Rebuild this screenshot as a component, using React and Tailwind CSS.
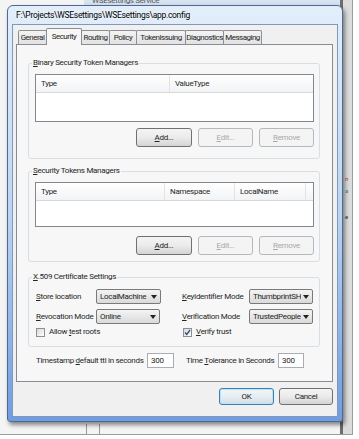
import React from 'react';

const tabs = [
  { label: 'General', w: 'w-[29px]' },
  { label: 'Security', w: 'w-[36px]', active: true },
  { label: 'Routing', w: 'w-[29px]' },
  { label: 'Policy', w: 'w-[28px]' },
  { label: 'TokenIssuing', w: 'w-[50px]' },
  { label: 'Diagnostics', w: 'w-[39px]' },
  { label: 'Messaging', w: 'w-[39px]' },
];

function U({ children }) {
  return <span className="underline underline-offset-1">{children}</span>;
}

function Btn({ children, disabled, primary, className = 'w-[56px] h-[19px]' }) {
  let look =
    'border-[#707070] bg-gradient-to-b from-[#f4f4f4] via-[#ebebeb] to-[#d4d4d4] text-[#222]';
  if (disabled) look = 'border-[#b5b9bc] bg-[#f4f4f4] text-[#a8a8a8]';
  if (primary)
    look =
      'border-[#3c7fb1] bg-gradient-to-b from-[#f2f6f8] via-[#e6eef2] to-[#d3dde2] text-[#222] shadow-[inset_0_0_0_1px_#b8e3f8]';
  return (
    <div className={`${className} ${look} rounded-[3px] border flex items-center justify-center`}>
      {children}
    </div>
  );
}

function Combo({ value, w = 'w-[65px]' }) {
  return (
    <div
      className={`${w} h-[15px] rounded-[2px] border border-[#7a7a7a] bg-gradient-to-b from-[#f4f4f4] to-[#dadada] flex items-center pl-[3px] pr-[3px] gap-[2px]`}
    >
      <span className="flex-1 overflow-hidden whitespace-nowrap">{value}</span>
      <svg width="6" height="4" viewBox="0 0 6 4">
        <path d="M0 0h6L3 4z" fill="#222" />
      </svg>
    </div>
  );
}

function Check({ checked }) {
  return (
    <div className="w-[9px] h-[9px] border border-[#8e8f8f] bg-gradient-to-br from-[#d8d8d8] to-white flex items-center justify-center">
      {checked && (
        <svg width="7" height="7" viewBox="0 0 7 7">
          <path d="M1 3.5l1.8 2L6 1" stroke="#2a4f8a" strokeWidth="1.3" fill="none" />
        </svg>
      )}
    </div>
  );
}

function ListView({ cols, h }) {
  return (
    <div className={`w-[279px] ${h} border border-[#828790] bg-white`}>
      <div className="flex h-[18px] border-b border-[#d8d8d8] bg-gradient-to-b from-white to-[#f2f3f5]">
        {cols.map((c, i) => (
          <div
            key={i}
            className={`${c.w} h-full flex items-center pl-[5px] border-r border-[#e2e3e5]`}
          >
            {c.label}
          </div>
        ))}
      </div>
    </div>
  );
}

function Group({ label, className, children }) {
  return (
    <div className={`relative w-[292px] rounded-[3px] border border-[#d5dfe5] ${className}`}>
      <div className="absolute -top-[5px] left-[3px] px-[1px] bg-[#f7f7f7] leading-none">
        {label}
      </div>
      {children}
    </div>
  );
}

function Buttons() {
  return (
    <div className="flex gap-[6px] justify-end pr-[5px]">
      <Btn>
        <U>A</U>dd...
      </Btn>
      <Btn disabled className="w-[55px] h-[19px]">
        <U>E</U>dit...
      </Btn>
      <Btn disabled className="w-[55px] h-[19px]">
        <U>R</U>emove
      </Btn>
    </div>
  );
}

export default function App() {
  return (
    <div className="w-[359px] h-[439px] bg-white overflow-hidden font-[Roboto,'Noto_Sans',sans-serif] text-[8px] tracking-[-0.3px] text-[#262626] leading-none">
      <div className="relative w-[353px] h-[435px] bg-[#f4f4f4] border-r border-b border-[#9c9c9c] overflow-hidden">
        {/* window behind, mostly hidden */}
        <div className="absolute left-[84px] top-[-6px] w-[260px] h-[12px] bg-gradient-to-b from-[#e7eef7] to-[#cfdcec] flex items-end pl-[8px] pb-[1px] text-[#555]">
          WSEsettings Service
        </div>
        <div className="absolute left-[340px] top-0 w-[13px] h-full bg-[#dcdcdc] border-l-[3px] border-[#6c6c6c]">
          <div className="mt-[176px] ml-[2px] text-[6px] text-[#b33]">n</div>
          <div className="mt-[6px] ml-[2px] text-[6px] text-[#3a8a8a]">a</div>
          <div className="mt-[20px] ml-[2px] text-[6px] text-[#333]">e</div>
        </div>
        <div className="absolute left-[86px] top-[424px] w-[14px] h-[12px] border-x border-[#9a9a9a]" />

        {/* dialog window */}
        <div className="absolute left-[7px] top-[5px] w-[336px] h-[417px] rounded-t-[6px] rounded-b-[3px] border border-[#4d6a94] bg-gradient-to-b from-[#e3eefa] via-[#bcd4f1] to-[#6f9de0] px-[4px] pb-[4px] flex flex-col shadow-[2px_3px_4px_rgba(0,0,0,0.45)]">
          <div className="h-[18px] flex items-center pl-[4px] text-[8.5px] text-black [text-shadow:0_0_4px_white]">
            F:\Projects\WSEsettings\WSEsettings\app.config
          </div>
          <div className="flex-1 border border-[#7e98be] bg-[#f0f0f0] flex flex-col pt-[3px]">
            {/* tabs */}
            <div className="flex items-end h-[16px] ml-[5px] tracking-[-0.5px]">
              {tabs.map((t, i) =>
                t.active ? (
                  <div
                    key={t.label}
                    className={`${t.w} h-[17px] -mb-px relative z-10 -ml-px border border-b-0 border-[#898c95] bg-[#f7f7f7] flex items-center justify-center rounded-t-[2px]`}
                  >
                    {t.label}
                  </div>
                ) : (
                  <div
                    key={t.label}
                    className={`${t.w} h-[14px] ${i ? '-ml-px' : ''} border border-b-0 border-[#8d9096] bg-gradient-to-b from-[#f3f3f3] to-[#e2e2e2] flex items-center justify-center rounded-t-[2px] whitespace-nowrap overflow-hidden`}
                  >
                    {t.label}
                  </div>
                ),
              )}
            </div>

            {/* tab page */}
            <div className="ml-[3px] w-[317px] h-[338px] border border-[#898c95] bg-[#f7f7f7] pl-[11px] pt-[18px]">
              <Group label={<><U>B</U>inary Security Token Managers</>} className="h-[96px] pt-[10px] pl-[6px]">
                <ListView
                  h="h-[48px]"
                  cols={[
                    { label: 'Type', w: 'w-[134px]' },
                    { label: 'ValueType', w: 'flex-1 border-r-0' },
                  ]}
                />
                <div className="mt-[6px]">
                  <Buttons />
                </div>
              </Group>

              <Group label={<><U>S</U>ecurity Tokens Managers</>} className="mt-[12px] h-[91px] pt-[10px] pl-[6px]">
                <ListView
                  h="h-[45px]"
                  cols={[
                    { label: 'Type', w: 'w-[129px]' },
                    { label: 'Namespace', w: 'w-[70px]' },
                    { label: 'LocalName', w: 'w-[71px]' },
                    { label: '', w: 'flex-1 border-r-0' },
                  ]}
                />
                <div className="mt-[9px]">
                  <Buttons />
                </div>
              </Group>

              <Group label={<><U>X</U>.509 Certificate Settings</>} className="mt-[15px] h-[70px] pt-[11px] pl-[7px]">
                <div className="flex">
                  <div className="w-[146px] flex flex-col">
                    <div className="flex items-center h-[15px]">
                      <span className="w-[60px]">
                        <U>S</U>tore location
                      </span>
                      <Combo value="LocalMachine" />
                    </div>
                    <div className="flex items-center h-[15px] mt-[5px]">
                      <span className="w-[60px]">
                        <U>R</U>evocation Mode
                      </span>
                      <Combo value="Online" w="w-[64px]" />
                    </div>
                    <div className="flex items-center gap-[4px] h-[10px] mt-[3px]">
                      <Check />
                      <span>
                        Allow <U>t</U>est roots
                      </span>
                    </div>
                  </div>
                  <div className="flex flex-col">
                    <div className="flex items-center h-[15px]">
                      <span className="w-[67px]">
                        <U>K</U>eyIdentifier Mode
                      </span>
                      <Combo value="ThumbprintSHA1" w="w-[64px]" />
                    </div>
                    <div className="flex items-center h-[15px] mt-[5px]">
                      <span className="w-[67px]">
                        <U>V</U>erification Mode
                      </span>
                      <Combo value="TrustedPeopleOrChainTrust" w="w-[64px]" />
                    </div>
                    <div className="flex items-center gap-[4px] h-[10px] mt-[3px] ml-[1px]">
                      <Check checked />
                      <span>
                        <U>V</U>erify trust
                      </span>
                    </div>
                  </div>
                </div>
              </Group>

              <div className="flex items-center h-[15px] mt-[6px] pl-[8px]">
                <span className="w-[111px] overflow-hidden whitespace-nowrap">
                  Timestamp <U>d</U>efault ttl in seconds
                </span>
                <div className="w-[27px] h-[15px] border border-[#abadb3] bg-white flex items-center pl-[3px]">
                  300
                </div>
                <span className="ml-[12px] w-[92px] overflow-hidden whitespace-nowrap">
                  Time <U>T</U>olerance in Seconds
                </span>
                <div className="w-[26px] h-[15px] border border-[#abadb3] bg-white flex items-center pl-[3px]">
                  300
                </div>
              </div>
            </div>

            {/* dialog buttons */}
            <div className="flex justify-end gap-[5px] mt-[6px] pr-[4px]">
              <Btn primary className="w-[55px] h-[17px]">
                OK
              </Btn>
              <Btn className="w-[54px] h-[17px]">Cancel</Btn>
            </div>
          </div>
        </div>
      </div>
    </div>
  );
}
